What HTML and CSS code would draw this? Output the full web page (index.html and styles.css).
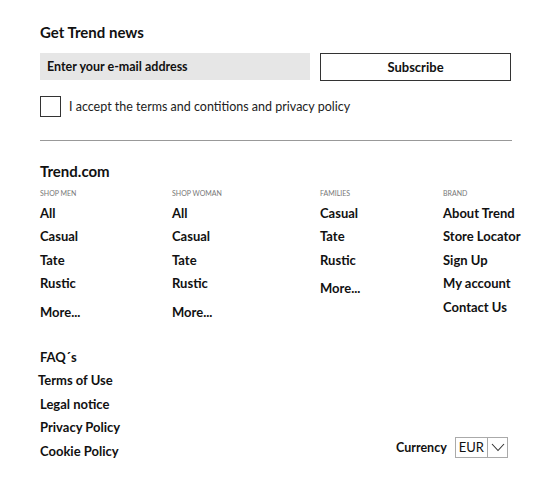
FILE: index.html
```html
<!DOCTYPE html>
<html lang="en">
    <head>
        <meta charset="UTF-8" />
        <meta name="viewport" content="width=device-width, initial-scale=1.0" />
        <title>Trend.com - Footer</title>
        <link rel="stylesheet" href="styles.css">
    </head>
    <body>
        <footer class="footer">
            <section class="news">
                <h2 class="news-title">Get Trend news</h2>
                <form class="news-form">
                    <input class="news-email" type="email" placeholder="Enter your e-mail address" />
                    <button class="news-subscribe" type="button">Subscribe</button>
                </form>
                <label class="news-accept">
                    <span class="checkbox"></span>
                    I accept the terms and contitions and privacy policy
                </label>
            </section>

            <section class="sitemap">
                <h2 class="brand-title">Trend.com</h2>
                <div class="columns">
                    <div class="column">
                        <h3>SHOP MEN</h3>
                        <a href="#">All</a>
                        <a href="#">Casual</a>
                        <a href="#">Tate</a>
                        <a href="#">Rustic</a>
                        <a href="#" class="more">More...</a>
                    </div>
                    <div class="column">
                        <h3>SHOP WOMAN</h3>
                        <a href="#">All</a>
                        <a href="#">Casual</a>
                        <a href="#">Tate</a>
                        <a href="#">Rustic</a>
                        <a href="#" class="more">More...</a>
                    </div>
                    <div class="column">
                        <h3>FAMILIES</h3>
                        <a href="#">Casual</a>
                        <a href="#">Tate</a>
                        <a href="#">Rustic</a>
                        <a href="#" class="more">More...</a>
                    </div>
                    <div class="column">
                        <h3>BRAND</h3>
                        <a href="#">About Trend</a>
                        <a href="#">Store Locator</a>
                        <a href="#">Sign Up</a>
                        <a href="#">My account</a>
                        <a href="#">Contact Us</a>
                    </div>
                </div>
            </section>

            <section class="bottom">
                <nav class="legal">
                    <a href="#">FAQ´s</a>
                    <a href="#" class="shifted">Terms of Use</a>
                    <a href="#">Legal notice</a>
                    <a href="#">Privacy Policy</a>
                    <a href="#">Cookie Policy</a>
                </nav>
                <div class="currency">
                    <span class="currency-label">Currency</span>
                    <div class="currency-select">
                        <span class="currency-value">EUR</span>
                        <span class="currency-arrow">
                            <svg width="14" height="9" viewBox="0 0 14 9">
                                <path d="M1 1 L7 7.5 L13 1" fill="none" stroke="#333" stroke-width="1.1" />
                            </svg>
                        </span>
                    </div>
                </div>
            </section>
        </footer>
    </body>
</html>
```

FILE: styles.css
```css
body {
    margin: 0;
    background-color: #fff;
    color: #111;
    font-family: Lato, "Liberation Sans", sans-serif;
}

.footer {
    width: 472px;
    padding: 22px 0 0 40px;
}

.news-title,
.brand-title {
    margin: 0;
    font-size: 15px;
    font-weight: 700;
    line-height: 20px;
}

.news-form {
    display: flex;
    gap: 10px;
    margin-top: 11px;
}

.news-email {
    width: 270px;
    height: 27px;
    box-sizing: border-box;
    border: none;
    background-color: #e6e6e6;
    padding: 0 7px;
    font-family: inherit;
    font-size: 12.5px;
    font-weight: 700;
}

.news-email::placeholder {
    color: #111;
}

.news-subscribe {
    width: 191px;
    height: 28px;
    box-sizing: border-box;
    border: 1px solid #333;
    background-color: #fff;
    font-family: inherit;
    font-size: 13px;
    font-weight: 700;
    color: #111;
}

.news-accept {
    display: flex;
    align-items: center;
    gap: 8px;
    margin-top: 15px;
    font-size: 12.5px;
    color: #222;
}

.checkbox {
    width: 21px;
    height: 21px;
    box-sizing: border-box;
    border: 1px solid #333;
}

.sitemap {
    margin-top: 23px;
    border-top: 1px solid #999;
    padding-top: 20px;
}

.columns {
    display: grid;
    grid-template-columns: 132px 148px 123px auto;
    margin-top: 6px;
}

.column {
    display: flex;
    flex-direction: column;
    white-space: nowrap;
}

.column h3 {
    margin: 0 0 3px;
    font-size: 7px;
    font-weight: 400;
    color: #777;
    line-height: 12px;
}

.column a,
.legal a {
    color: #111;
    text-decoration: none;
    font-size: 13px;
    font-weight: 700;
    line-height: 23.4px;
    white-space: nowrap;
}

.column a.more {
    margin-top: 5px;
}

.bottom {
    display: flex;
    justify-content: space-between;
    align-items: flex-end;
    margin-top: 22px;
    padding-right: 4px;
}

.legal {
    display: flex;
    flex-direction: column;
}

.legal a.shifted {
    margin-left: -2px;
}

.currency {
    display: flex;
    align-items: center;
    gap: 8px;
    margin-bottom: 5px;
}

.currency-label {
    font-size: 12.5px;
    font-weight: 700;
}

.currency-select {
    display: flex;
    height: 19px;
    border: 1px solid #aaa;
    font-size: 13px;
}

.currency-value {
    padding: 0 3px;
    line-height: 19px;
    border-right: 1px solid #aaa;
}

.currency-arrow {
    display: flex;
    align-items: center;
    padding: 0 2px 0 3px;
}
```
